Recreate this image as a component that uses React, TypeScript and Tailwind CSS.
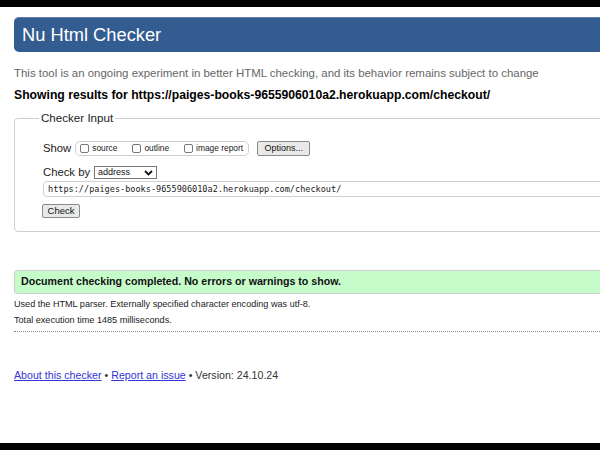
import React from "react";

export default function App() {
  const sans = { fontFamily: '"Liberation Sans", Arial, sans-serif' };
  return (
    <div className="w-[600px] h-[450px] overflow-hidden bg-white flex flex-col" style={sans}>
      <div className="h-[7px] bg-black shrink-0" />
      <div className="flex-1 relative overflow-hidden">
        <div className="w-[700px] pl-[14px]">
          {/* Header */}
          <div className="mt-[10px] h-[35px] bg-[#335d90] border-t border-[#5a7fae] rounded-l-[5px] flex items-center pl-[8px]">
            <span className="text-white text-[18.3px] leading-none">Nu Html Checker</span>
          </div>
          <p className="mt-[14px] text-[11.45px] leading-[14px] text-[#666]">
            This tool is an ongoing experiment in better HTML checking, and its behavior remains subject to change
          </p>
          <p className="mt-[7px] text-[12.2px] leading-[16px] font-bold text-black">
            Showing results for https://paiges-books-9655906010a2.herokuapp.com/checkout/
          </p>
          {/* Fieldset */}
          <div className="relative mt-[15px] h-[114px] border border-[#cfcfcf] rounded-l-[4px]">
            <div className="absolute left-[24px] top-[-8px] bg-white px-[2px] text-[11.6px] leading-[14px] text-[#222]">
              Checker Input
            </div>
            <div className="pl-[28px] pt-[22px]">
              <div className="flex items-center h-[15px]">
                <span className="text-[11.3px] text-[#222] mr-[4px]">Show</span>
                <div className="flex items-center h-[15px] w-[174px] border border-[#cfcfcf] rounded-[5px] pl-[4px] text-[8.4px] text-[#222]">
                  <span className="w-[9px] h-[9px] border border-[#777] rounded-[2px] bg-white mr-[3px]" />
                  <span className="mr-[15px]">source</span>
                  <span className="w-[9px] h-[9px] border border-[#777] rounded-[2px] bg-white mr-[3px]" />
                  <span className="mr-[15px]">outline</span>
                  <span className="w-[9px] h-[9px] border border-[#777] rounded-[2px] bg-white mr-[3px]" />
                  <span>image report</span>
                </div>
                <div className="ml-[8px] h-[15px] w-[53px] border border-[#8a8a8a] bg-[#e9e9e9] rounded-[2px] flex items-center justify-center text-[9px] text-[#111]">
                  Options...
                </div>
              </div>
              <div className="flex items-center mt-[10px] h-[13px]">
                <span className="text-[11.3px] text-[#222] mr-[4px]">Check by</span>
                <div className="h-[13px] w-[63px] border border-[#777] bg-white flex items-center justify-between px-[3px] text-[9px] text-[#111]">
                  <span>address</span>
                  <svg width="9" height="6" viewBox="0 0 9 6">
                    <path d="M1 1 L4.5 4.5 L8 1" stroke="#111" strokeWidth="1.8" fill="none" />
                  </svg>
                </div>
              </div>
              <div className="mt-[2px] h-[16px] border border-[#cfcfcf] rounded-l-[4px] flex items-center pl-[4px]">
                <span className="text-[8.55px] text-[#222]" style={{ fontFamily: '"DejaVu Sans Mono", monospace' }}>
                  https://paiges-books-9655906010a2.herokuapp.com/checkout/
                </span>
              </div>
              <div className="mt-[7px] -ml-[1px] h-[14px] w-[38px] border border-[#8a8a8a] bg-[#e9e9e9] rounded-[2px] flex items-center justify-center text-[9.5px] text-[#111]">
                Check
              </div>
            </div>
          </div>
          {/* Success */}
          <div className="mt-[38px] h-[24px] bg-[#c6fcca] border border-[#cfcfcf] rounded-l-[3px] flex items-center pl-[6px]">
            <span className="text-[10.65px] font-bold text-[#111]">
              Document checking completed. No errors or warnings to show.
            </span>
          </div>
          <p className="mt-[4px] text-[9.1px] leading-[12px] text-[#222]">
            Used the HTML parser. Externally specified character encoding was utf-8.
          </p>
          <p className="mt-[4px] text-[9.1px] leading-[12px] text-[#222]">Total execution time 1485 milliseconds.</p>
          <div className="mt-[5px] border-t border-dotted border-[#888]" />
          <p className="mt-[36px] text-[10.65px] leading-[14px] text-[#333]">
            <span className="underline text-[#3434d6]">About this checker</span> •{" "}
            <span className="underline text-[#3434d6]">Report an issue</span> • Version: 24.10.24
          </p>
        </div>
      </div>
      <div className="h-[7px] bg-black shrink-0" />
    </div>
  );
}
